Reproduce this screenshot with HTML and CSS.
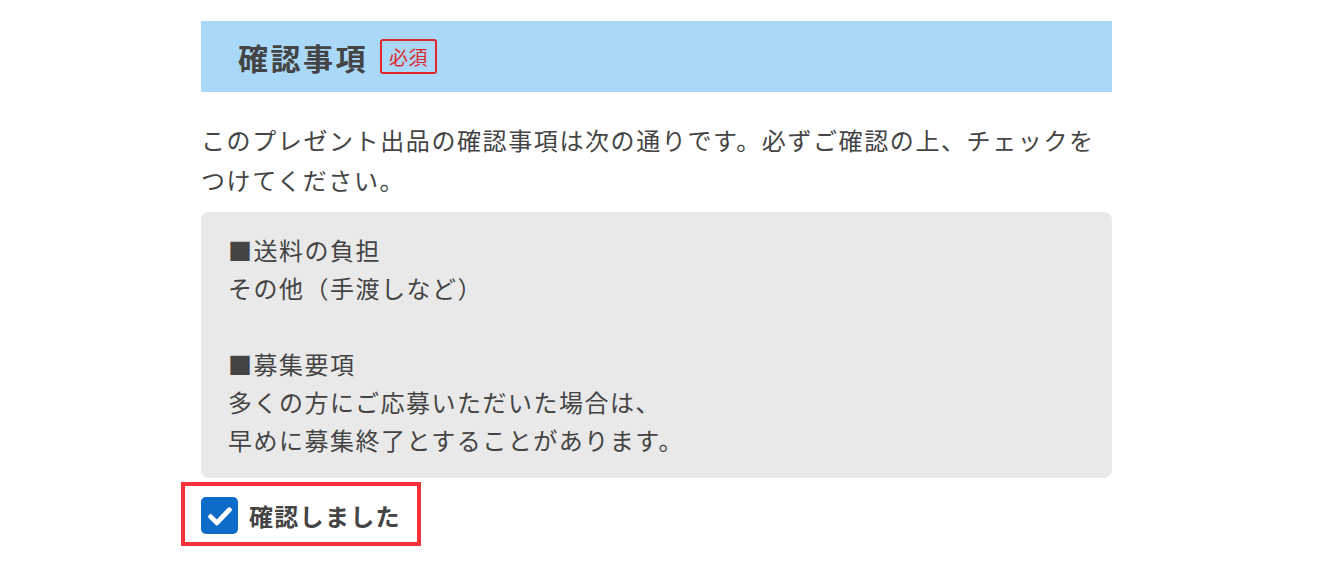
FILE: index.html
```html
<!DOCTYPE html>
<html lang="ja">
<head>
    <meta charset="UTF-8">
    <meta name="viewport" content="width=device-width, initial-scale=1.0">
    <title>確認事項</title>
    <link rel="stylesheet" href="styles.css">
</head>
<body>
    <div class="container">
        <div class="section-head">
            <h2>確認事項</h2>
            <span class="required">必須</span>
        </div>

        <p class="lead">このプレゼント出品の確認事項は次の通りです。必ずご確認の上、チェックをつけてください。</p>

        <div class="notes">
            <p>■送料の負担</p>
            <p>その他（手渡しなど）</p>
            <p>&nbsp;</p>
            <p>■募集要項</p>
            <p>多くの方にご応募いただいた場合は、</p>
            <p>早めに募集終了とすることがあります。</p>
        </div>

        <label class="confirm">
            <span class="check">
                <svg width="30" height="30" viewBox="0 0 24 24"><path d="M4.5 12.5l5 5L19.5 7" fill="none" stroke="#fff" stroke-width="3.8" stroke-linecap="round" stroke-linejoin="round"/></svg>
            </span>
            <span class="confirm-text">確認しました</span>
        </label>
    </div>
</body>
</html>
```

FILE: styles.css
```css
* { margin: 0; padding: 0; box-sizing: border-box; }
body {
    background: #fff; color: #444;
    font-family: "Noto Sans CJK JP", "Noto Sans", sans-serif;
}
.container { width: 911px; margin-left: 201px; padding-top: 21px; }
.section-head {
    display: flex; align-items: center; height: 71px; padding-left: 37px;
    background: #aad8f8;
}
.section-head h2 { font-size: 30px; font-weight: bold; color: #444; line-height: 1; letter-spacing: 2.5px; }
.required {
    margin-left: 12px; padding: 0 7px; border: 2px solid #e0262a; border-radius: 3px;
    color: #e0262a; font-size: 19px; line-height: 31px; letter-spacing: 0.5px;
}
.lead { margin-top: 28px; font-size: 24px; line-height: 40px; color: #444; letter-spacing: 1.6px; }
.notes {
    margin-top: 12px; padding: 19px 27px; background: #e9e9e9; border-radius: 8px;
    font-size: 24px; line-height: 38px; color: #444; letter-spacing: 1.5px;
}
.confirm {
    display: inline-flex; align-items: center; gap: 11px; margin-top: 4px; margin-left: -20px;
    padding: 11px 16px 8px; border: 4px solid #f5323a;
}
.check {
    display: flex; align-items: center; justify-content: center; width: 37px; height: 37px;
    background: #0d6cc7; border-radius: 5px;
}
.confirm-text { font-size: 24px; font-weight: bold; color: #444; line-height: 37px; letter-spacing: 1.3px; }
```
